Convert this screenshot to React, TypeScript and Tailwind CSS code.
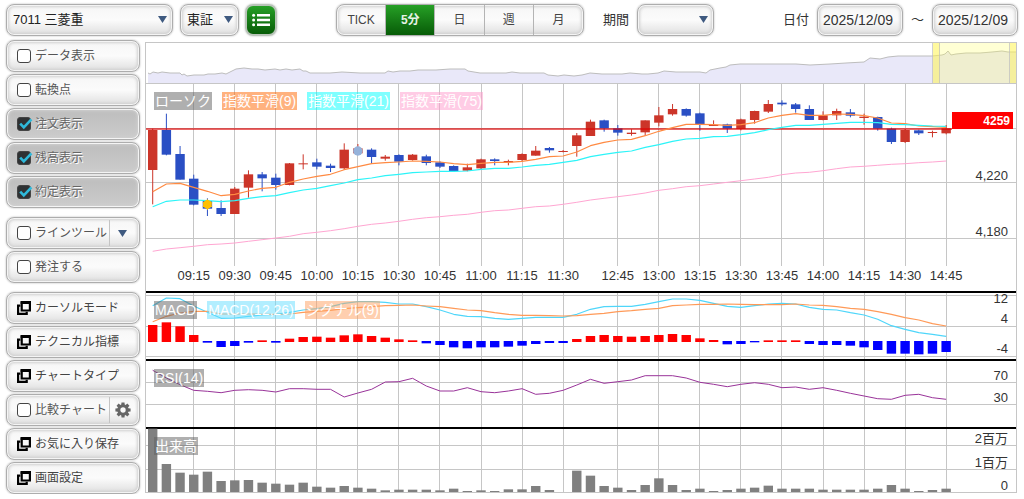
import { ReactNode, useState } from 'react'
import clsx from 'clsx'

// one entry per 5-minute bar: [direction, body top, body bottom, high, low], in plot units
type Candle = ['up' | 'down', number, number, number, number]

const candles: Candle[] = [
  ['up', 120, 240, 116, 343],
  ['down', 120, 194, 71, 196],
  ['down', 192, 269, 168, 269],
  ['down', 266, 344, 254, 346],
  ['down', 333, 356, 325, 378],
  ['down', 354, 372, 331, 378],
  ['up', 296, 372, 291, 372],
  ['up', 253, 293, 241, 323],
  ['down', 253, 265, 246, 304],
  ['down', 263, 285, 251, 299],
  ['up', 220, 285, 219, 286],
  ['up', 220, 223, 193, 238],
  ['down', 217, 230, 206, 238],
  ['down', 227, 234, 221, 246],
  ['up', 179, 235, 160, 240],
  ['up', 175, 190, 162, 190],
  ['down', 179, 201, 175, 220],
  ['up', 200, 206, 195, 212],
  ['down', 195, 215, 193, 226],
  ['up', 194, 210, 192, 212],
  ['down', 199, 219, 194, 226],
  ['down', 217, 230, 214, 234],
  ['down', 228, 243, 226, 245],
  ['up', 232, 242, 221, 244],
  ['up', 208, 235, 206, 237],
  ['down', 208, 213, 205, 226],
  ['up', 213, 217, 209, 226],
  ['up', 192, 210, 190, 213],
  ['up', 182, 197, 168, 197],
  ['down', 174, 181, 171, 188],
  ['up', 183, 186, 180, 187],
  ['up', 136, 168, 129, 200],
  ['up', 95, 138, 89, 138],
  ['down', 91, 115, 89, 125],
  ['down', 115, 128, 105, 137],
  ['up', 128, 132, 118, 137],
  ['up', 91, 127, 91, 136],
  ['up', 76, 98, 51, 109],
  ['up', 57, 73, 42, 77],
  ['down', 57, 77, 55, 80],
  ['down', 70, 103, 68, 122],
  ['up', 105, 108, 91, 108],
  ['down', 103, 116, 101, 129],
  ['up', 88, 117, 86, 121],
  ['up', 63, 90, 62, 101],
  ['up', 42, 65, 30, 69],
  ['down', 38, 43, 31, 47],
  ['down', 43, 57, 39, 68],
  ['down', 57, 90, 46, 90],
  ['up', 76, 90, 64, 91],
  ['up', 63, 76, 56, 90],
  ['down', 67, 77, 57, 82],
  ['up', 80, 84, 71, 104],
  ['down', 81, 116, 80, 122],
  ['down', 116, 156, 113, 162],
  ['up', 120, 156, 117, 159],
  ['down', 121, 130, 119, 135],
  ['up', 126, 129, 122, 142],
  ['up', 115, 130, 105, 133],
]

const ema9 = [
  305, 282, 280, 292, 304, 317, 313, 303, 295, 292, 277, 267, 259, 253, 239, 230, 221, 218, 216, 213,
  214, 216, 221, 224, 220, 217, 217, 214, 208, 200, 198, 186, 167, 157, 150, 148, 137, 124, 113, 103,
  103, 104, 106, 104, 98, 84, 76, 71, 76, 76, 72, 73, 77, 84, 99, 101, 108, 110, 112,
]
const ema21 = [
  350, 334, 330, 330, 332, 335, 332, 325, 320, 317, 308, 300, 295, 287, 279, 269, 264, 257, 253, 248,
  246, 244, 244, 243, 238, 235, 235, 231, 226, 223, 217, 211, 200, 193, 187, 183, 172, 164, 154, 147,
  145, 140, 139, 134, 128, 119, 112, 106, 106, 103, 100, 97, 97, 98, 103, 104, 106, 108, 109,
]
const ema75 = [
  484, 477, 473, 469, 464, 462, 459, 454, 449, 444, 439, 431, 427, 422, 416, 409, 403, 399, 394, 388,
  383, 380, 376, 373, 367, 362, 360, 355, 350, 348, 343, 337, 330, 325, 320, 315, 309, 301, 296, 290,
  287, 282, 277, 272, 267, 262, 254, 249, 247, 242, 236, 231, 229, 226, 223, 221, 218, 216, 213,
]
const macd = [
  62, 39, 41, 63, 82, 100, 99, 94, 90, 88, 82, 75, 71, 65, 55, 50, 50, 52, 57, 57,
  65, 75, 88, 94, 95, 100, 103, 100, 97, 97, 97, 88, 73, 65, 64, 64, 58, 50, 42, 42,
  46, 55, 64, 67, 62, 57, 55, 57, 67, 73, 75, 83, 90, 103, 122, 133, 143, 148, 154,
]
const macdSignal = [
  110, 94, 84, 79, 79, 87, 87, 87, 88, 88, 87, 82, 79, 76, 71, 68, 65, 62, 61, 60,
  63, 65, 70, 75, 77, 83, 88, 91, 91, 92, 93, 92, 88, 85, 80, 77, 73, 70, 62, 60,
  58, 58, 57, 58, 59, 59, 59, 57, 60, 61, 65, 70, 73, 80, 88, 98, 105, 116, 123,
]
const histogram = [
  51, 59, 47, 21, -5, -18, -15, -5, 5, -5, 10, 15, 16, 13, 20, 23, 18, 13, 8, 5,
  -7, -12, -19, -22, -19, -19, -17, -14, -9, -6, -6, 9, 18, 21, 18, 16, 18, 21, 24, 21,
  11, 6, -10, -9, -4, 5, 5, 5, -9, -12, -12, -14, -19, -27, -38, -38, -40, -38, -33,
]
const rsi = [
  256, 279, 299, 316, 319, 323, 316, 314, 316, 321, 311, 311, 313, 313, 336, 324, 313, 291, 290, 280,
  303, 318, 318, 308, 320, 323, 318, 311, 328, 325, 316, 300, 283, 295, 290, 285, 272, 272, 272, 279,
  292, 298, 305, 298, 293, 298, 308, 306, 313, 308, 316, 325, 333, 341, 343, 331, 328, 338, 343,
]
const volume = [
  190, 84, 58, 52, 61, 33, 35, 36, 28, 25, 22, 28, 16, 13, 18, 13, 10, 5, 7, 7,
  7, 5, 10, 3, 5, 3, 8, 8, 18, 6, 0, 64, 49, 18, 13, 6, 21, 41, 21, 6,
  10, 3, 6, 10, 13, 19, 10, 10, 10, 7, 7, 7, 7, 10, 21, 10, 3, 6, 10,
]

const overview: [number, number][] = [
  [2, 30], [4, 31], [7, 29], [12, 30], [16, 29], [24, 30], [34, 30], [36, 32], [38, 31], [41, 33], [48, 32], [52, 32],
  [58, 32], [62, 31], [69, 31], [76, 30], [80, 31], [84, 29], [90, 26], [98, 25], [106, 26], [112, 26], [119, 27],
  [129, 26], [134, 27], [140, 26], [146, 27], [154, 26], [157, 28], [160, 28], [164, 30], [170, 30], [176, 30],
  [184, 30], [196, 29], [214, 30], [239, 30], [242, 28], [247, 29], [254, 28], [264, 28], [272, 27], [290, 27],
  [304, 26], [319, 26], [322, 28], [334, 30], [360, 30], [366, 29], [374, 30], [398, 30], [402, 32], [412, 33],
  [418, 32], [428, 33], [436, 32], [444, 30], [456, 31], [476, 31], [484, 30], [496, 31], [502, 31], [512, 30],
  [518, 28], [530, 29], [542, 29], [554, 29], [560, 30], [564, 27], [574, 25], [580, 24], [584, 22], [594, 21],
  [620, 21], [650, 21], [664, 22], [684, 21], [700, 20], [718, 19], [724, 15], [734, 16], [742, 14], [752, 13],
  [770, 13], [786, 13], [796, 12], [799, 11], [802, 8], [805, 12], [810, 11], [820, 10], [834, 10], [846, 9],
  [856, 8], [862, 9], [870, 9],
]

const timeTicks: [number, string][] = [
  [3, '09:15'], [6, '09:30'], [9, '09:45'], [12, '10:00'], [15, '10:15'], [18, '10:30'], [21, '10:45'],
  [24, '11:00'], [27, '11:15'], [30, '11:30'], [34, '12:45'], [37, '13:00'], [40, '13:15'], [43, '13:30'],
  [46, '13:45'], [49, '14:00'], [52, '14:15'], [55, '14:30'], [58, '14:45'],
]

const WIDTH = 870
const barX = (i: number) => 6.7 + i * 13.68

const toPoints = (values: number[], offset: number) =>
  values.map((v, i) => `${barX(i).toFixed(1)},${(v / 3 + offset).toFixed(1)}`).join(' ')

interface GridProps {
  height: number
  rows: number[]
}

function Grid({ height, rows }: GridProps) {
  return (
    <g stroke="#c6c6c6" shapeRendering="crispEdges">
      {timeTicks.map(([i]) => (
        <line key={i} x1={barX(i)} x2={barX(i)} y1={0} y2={height} />
      ))}
      {rows.map(y => (
        <line key={y} x1={0} x2={WIDTH} y1={y + 0.5} y2={y + 0.5} />
      ))}
    </g>
  )
}

function AxisLabels({ labels }: { labels: [number, string][] }) {
  return (
    <g className="fill-[#333] text-[13px]" textAnchor="end">
      {labels.map(([y, text]) => (
        <text key={text} x={862} y={y}>{text}</text>
      ))}
    </g>
  )
}

interface PaneProps {
  height: number
  label: string
  legends?: [string, string][]
  className?: string
  children: ReactNode
}

function Pane({ height, label, legends = [], className, children }: PaneProps) {
  return (
    <div className={clsx('relative', className)}>
      <svg
        viewBox={`0 0 ${WIDTH} ${height}`}
        className="block h-auto w-full overflow-visible"
        role="img"
        aria-label={label}
      >
        {children}
      </svg>
      <div className="absolute left-2 top-2 flex gap-2.5">
        {legends.map(([text, color]) => (
          <span key={text} className={clsx('h-[18px] px-px text-sm leading-[18px] text-white whitespace-nowrap', color)}>
            {text}
          </span>
        ))}
      </div>
    </div>
  )
}

function Overview() {
  const line = overview.map(p => p.join(',')).join(' ')
  return (
    <Pane height={40} label="全期間" className="border-b border-[#c6c6c6]">
      <polygon points={`2,40 ${line} 870,40`} fill="#e9e8f9" />
      <polyline points={line} fill="none" stroke="#bdbdbd" />
      <rect x={787} y={0} width={83} height={40} fill="#ffff66" fillOpacity={0.28} />
      <rect x={787} y={0} width={7} height={40} fill="#ffef50" fillOpacity={0.4} />
      <rect x={864} y={0} width={6} height={40} fill="#ffef50" fillOpacity={0.4} />
      <g stroke="#bdbdbd" strokeOpacity={0.7} shapeRendering="crispEdges">
        <line x1={786.5} x2={786.5} y1={0} y2={40} />
        <line x1={793.5} x2={793.5} y1={0} y2={40} />
        <line x1={863.5} x2={863.5} y1={0} y2={40} />
      </g>
    </Pane>
  )
}

function PricePane() {
  return (
    <Pane
      height={207}
      label="ローソク"
      className="border-b-2 border-black"
      legends={[
        ['ローソク', 'bg-[#606060]/50'],
        ['指数平滑(9)', 'bg-[#ff6600]/50'],
        ['指数平滑(21)', 'bg-[#00ffff]/50'],
        ['指数平滑(75)', 'bg-[#ff99cc]/50'],
      ]}
    >
      <Grid height={182} rows={[44, 98, 154]} />
      {candles.map(([dir, top, bottom, high, low], i) => (
        <g key={i} fill={dir === 'up' ? '#cc3529' : '#2a4fc4'}>
          <rect x={barX(i) - 0.5} y={high / 3 + 6} width={1} height={(low - high) / 3} />
          <rect x={barX(i) - 4.7} y={top / 3 + 6} width={9.4} height={(bottom - top) / 3} />
        </g>
      ))}
      <rect x={0} y={44} width={806} height={2} fill="#e00000" fillOpacity={0.6} />
      <g fill="none" strokeLinejoin="round">
        <polyline points={toPoints(ema75, 6)} stroke="#ffa6d2" />
        <polyline points={toPoints(ema9, 6)} stroke="#ff8a42" strokeWidth={1.2} />
        <polyline points={toPoints(ema21, 6)} stroke="#2cf4f8" strokeWidth={1.2} />
      </g>
      <circle cx={barX(4)} cy={120.3} r={4.3} fill="#ffc000" />
      <path d="M61.4 115l1.6 2.6 3.4.8-1.6 2 1.6 2.4-3 .6-2 2.6-2-2.6-3-.6 1.6-2.4-1.6-2 3.4-.8z" fill="#ffc000" />
      <circle cx={barX(15)} cy={67} r={4.7} fill="#95b2da" />
      <rect x={806} y={28} width={61} height={17} fill="#f00" />
      <text x={864} y={41} textAnchor="end" className="fill-white text-xs font-bold">4259</text>
      <AxisLabels labels={[[96, '4,220'], [152, '4,180']]} />
      <g className="fill-[#333] text-[13px]" textAnchor="middle">
        {timeTicks.map(([i, text]) => (
          <text key={text} x={barX(i)} y={196}>{text}</text>
        ))}
      </g>
    </Pane>
  )
}

function MacdPane() {
  return (
    <Pane
      height={66}
      label="MACD"
      className="border-b-2 border-black"
      legends={[
        ['MACD', 'bg-[#606060]/50'],
        ['MACD(12,26)', 'bg-[#66ddff]/50'],
        ['シグナル(9)', 'bg-[#ffa060]/50'],
      ]}
    >
      <Grid height={66} rows={[2, 33, 63]} />
      {histogram.map((v, i) => (
        <rect
          key={i}
          x={barX(i) - 4.7}
          y={v > 0 ? 49 - v / 3 : 48}
          width={9.4}
          height={Math.abs(v) / 3}
          fill={v > 0 ? '#f00' : '#00f'}
        />
      ))}
      <g fill="none" strokeWidth={1.2} strokeLinejoin="round">
        <polyline points={toPoints(macd, -8)} stroke="#4fd6fa" />
        <polyline points={toPoints(macdSignal, -8)} stroke="#ff9a58" />
      </g>
      <AxisLabels labels={[[10, '12'], [30, '4'], [60, '-4']]} />
    </Pane>
  )
}

function RsiPane() {
  return (
    <Pane height={66} label="RSI" className="border-b-2 border-black" legends={[['RSI(14)', 'bg-[#606060]/50']]}>
      <Grid height={66} rows={[21, 43]} />
      <polyline points={toPoints(rsi, -76)} fill="none" stroke="#993399" />
      <AxisLabels labels={[[19, '70'], [41, '30']]} />
    </Pane>
  )
}

function VolumePane() {
  return (
    <Pane height={63} label="出来高" legends={[['出来高', 'bg-[#606060]/50']]}>
      <Grid height={63} rows={[16, 40]} />
      {volume.map((v, i) => (
        <rect key={i} x={barX(i) - 4.7} y={63 - v / 3} width={9.4} height={v / 3} fill="#808080" />
      ))}
      <AxisLabels labels={[[14, '2百万'], [38, '1百万'], [61, '0']]} />
    </Pane>
  )
}

const frame =
  'h-8 rounded-lg border border-[#adadad] shadow-[0_0_2px_#b0b0b0,inset_0_0_0_1px_#f4f4f4,inset_0_0_3px_2px_#cfcfcf]'
const face = 'bg-linear-to-b from-[#f6f6f6] via-[#fbfbfb] to-[#dfdfdf]'

function Arrow({ className }: { className?: string }) {
  return (
    <svg viewBox="0 0 9 7" className={clsx('h-[7px] w-[9px]', className)} fill="#3f5a80" aria-hidden="true">
      <path d="M0 0h9L4.5 7z" />
    </svg>
  )
}

function WindowIcon() {
  return (
    <svg viewBox="0 0 14 14" className="size-[14px] shrink-0" fill="none" stroke="#000" aria-hidden="true">
      <path d="M3.4 4.6H1.1v8.3h8.6v-2.2" strokeWidth={2.2} />
      <path d="M4.7 1.5h8.2v8H4.7z" fill="#f8f8f8" strokeWidth={2.2} />
      <path d="M3.6 1.5H14" strokeWidth={3} />
    </svg>
  )
}

function GearIcon() {
  return (
    <svg viewBox="0 0 16 16" className="size-4" aria-hidden="true">
      <g fill="#666">
        {[0, 45, 90, 135, 180, 225, 270, 315].map(a => (
          <path key={a} d="M6.2 3.4L6.5.4h3l.3 3z" transform={`rotate(${a} 8 8)`} />
        ))}
      </g>
      <circle cx={8} cy={8} r={4.2} fill="none" stroke="#666" strokeWidth={3} />
    </svg>
  )
}

interface SelectProps {
  label: string
  options: string[]
  className: string
}

function Select({ label, options, className }: SelectProps) {
  return (
    <div className={clsx('relative', className)}>
      <select
        aria-label={label}
        className={clsx(frame, face, 'w-full appearance-none pl-1.5 pr-4 text-[13px] leading-5 text-[#222]')}
      >
        {options.map(o => <option key={o}>{o}</option>)}
      </select>
      <Arrow className="pointer-events-none absolute right-1.5 top-3" />
    </div>
  )
}

interface ToggleProps {
  label: string
  defaultChecked?: boolean
  action?: ReactNode
  actionLabel?: string
}

function Toggle({ label, defaultChecked = false, action, actionLabel }: ToggleProps) {
  const [checked, setChecked] = useState(defaultChecked)

  return (
    <div className={clsx(frame, 'flex items-center', checked ? 'bg-linear-to-b from-[#bdbdbd] to-[#cccccc]' : face)}>
      <label className="flex grow items-center gap-1 pl-[10px] text-xs whitespace-nowrap text-[#555]">
        <span className="relative size-[14px] shrink-0">
          <input
            type="checkbox"
            checked={checked}
            onChange={e => setChecked(e.target.checked)}
            className="block size-[14px] appearance-none rounded-[3px] border border-[#444] bg-white checked:bg-[#2f3234]"
          />
          {checked && (
            <svg viewBox="0 0 14 14" className="pointer-events-none absolute left-0 top-0 size-[14px] overflow-visible" aria-hidden="true">
              <path d="M3.2 6.6l3.6 3.8 7.6-8" fill="none" stroke="#2fb9da" strokeWidth={2.6} />
            </svg>
          )}
        </span>
        <span className={clsx(checked && 'text-[#666] text-shadow-[1px_1px_0_#fff]')}>{label}</span>
      </label>
      {action && (
        <button
          type="button"
          aria-label={actionLabel}
          className="flex h-[26px] w-[30px] shrink-0 items-center justify-center border-l border-[#c4c4c4] pr-1"
        >
          {action}
        </button>
      )}
    </div>
  )
}

function MenuButton({ label }: { label: string }) {
  return (
    <button
      type="button"
      className={clsx(frame, face, 'flex items-center gap-1 pl-[10px] text-xs whitespace-nowrap text-[#444]')}
    >
      <WindowIcon />
      {label}
    </button>
  )
}

function Sidebar() {
  return (
    <aside className="flex w-[134px] shrink-0 flex-col gap-[9px]">
      <div className="flex flex-col gap-0.5">
        <Toggle label="データ表示" />
        <Toggle label="転換点" />
        <Toggle label="注文表示" defaultChecked />
        <Toggle label="残高表示" defaultChecked />
        <Toggle label="約定表示" defaultChecked />
      </div>
      <div className="flex flex-col gap-0.5">
        <Toggle label="ラインツール" action={<Arrow />} actionLabel="ラインツールを選択" />
        <Toggle label="発注する" />
      </div>
      <div className="flex flex-col gap-0.5">
        <MenuButton label="カーソルモード" />
        <MenuButton label="テクニカル指標" />
        <MenuButton label="チャートタイプ" />
        <Toggle label="比較チャート" action={<GearIcon />} actionLabel="比較チャートの設定" />
        <MenuButton label="お気に入り保存" />
        <MenuButton label="画面設定" />
      </div>
    </aside>
  )
}

const intervals = ['TICK', '5分', '日', '週', '月']

function Toolbar() {
  const [interval, setInterval] = useState('5分')

  return (
    <header className="flex items-center pb-1 text-[13px] text-[#333]">
      <Select label="銘柄" options={['7011 三菱重']} className="w-[167px]" />
      <Select label="市場" options={['東証']} className="ml-[7px] w-[59px]" />
      <button
        type="button"
        aria-label="銘柄一覧"
        className="ml-1.5 flex size-8 items-center justify-center rounded-lg border-2 border-[#b9c4b9] bg-linear-to-b from-[#26a026] to-[#075c07] shadow-[0_0_2px_#b0b0b0]"
      >
        <svg viewBox="0 0 18 14" className="h-[14px] w-[18px]" fill="#fff" aria-hidden="true">
          <path d="M5 1h13v2.4H5zM5 5.8h13v2.4H5zM5 10.6h13V13H5z" />
          <circle cx={1.6} cy={2.2} r={1.5} />
          <circle cx={1.6} cy={7} r={1.5} />
          <circle cx={1.6} cy={11.8} r={1.5} />
        </svg>
      </button>
      <div className={clsx(frame, face, 'ml-[59px] grid w-[248px] grid-cols-5 overflow-hidden')}>
        {intervals.map(item => (
          <button
            key={item}
            type="button"
            onClick={() => setInterval(item)}
            className={clsx(
              'border-r border-[#b4b4b4] text-xs last:border-r-0',
              item === interval ? 'bg-linear-to-b from-[#26a026] to-[#075c07] font-bold text-[#e6f3e6]' : 'text-[#444]'
            )}
          >
            {item}
          </button>
        ))}
      </div>
      <span className="ml-[19px]">期間</span>
      <Select label="期間" options={['']} className="ml-2 w-[77px]" />
      <div className="ml-auto flex items-center gap-2">
        <span>日付</span>
        <input
          type="text"
          aria-label="開始日"
          defaultValue="2025/12/09"
          className={clsx(frame, face, 'w-[86px] pl-[5px] text-sm')}
        />
        <span>〜</span>
        <input
          type="text"
          aria-label="終了日"
          defaultValue="2025/12/09"
          className={clsx(frame, face, 'w-[86px] pl-[5px] text-sm')}
        />
      </div>
    </header>
  )
}

export default function App() {
  return (
    <div className="bg-white px-1.5 pt-1 font-['Liberation_Sans','Noto_Sans_CJK_JP',sans-serif]">
      <Toolbar />
      <div className="flex items-start gap-[5px] pr-px">
        <Sidebar />
        <main className="mt-0.5 min-w-0 grow border border-[#c6c6c6]">
          <Overview />
          <PricePane />
          <MacdPane />
          <RsiPane />
          <VolumePane />
        </main>
      </div>
    </div>
  )
}
